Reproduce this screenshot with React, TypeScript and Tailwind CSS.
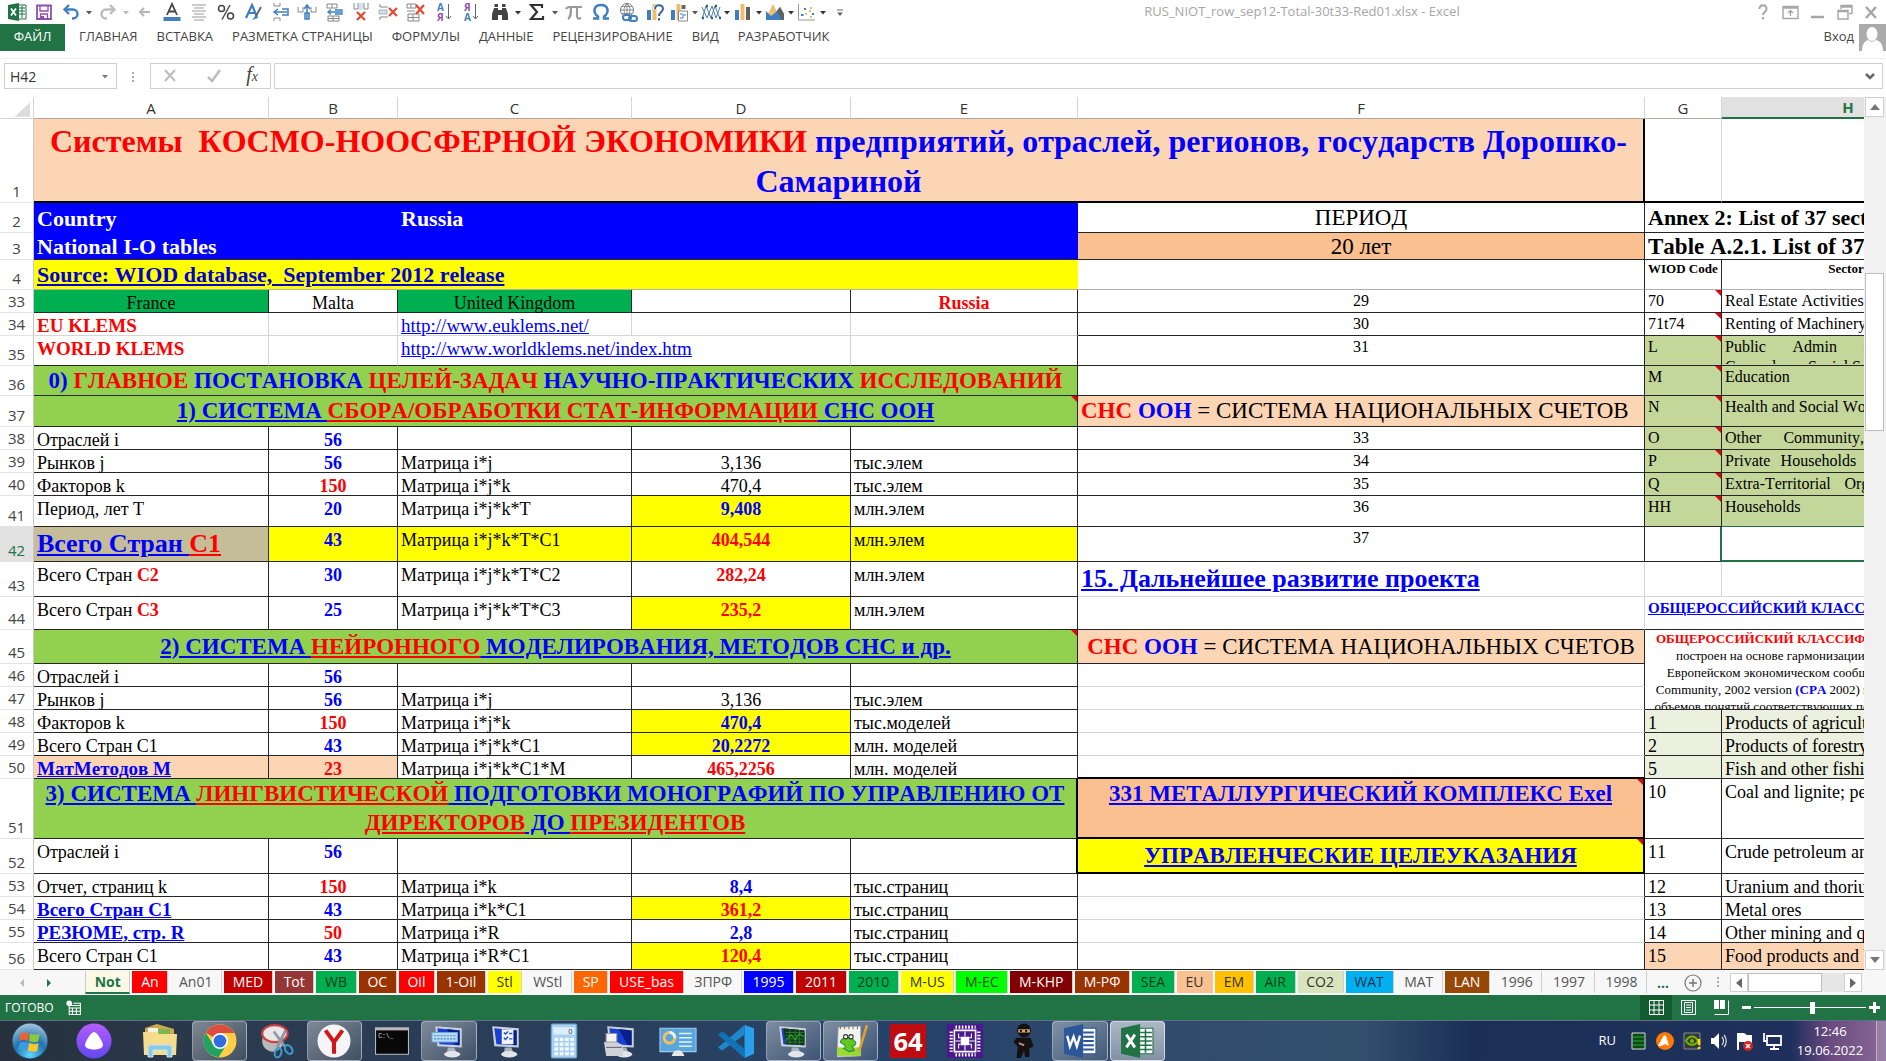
import React, { ReactNode } from "react";

interface CellProps {
  children?: ReactNode;
  className?: string;
  b?: string;
  span?: number;
  rows?: number;
  note?: boolean;
}

const BLACK = 'border-r border-b border-neutral-800';
const GRID = 'border-r border-b border-[#d6d6d6]';

const C = ({ children, className = '', b = BLACK, span, rows, note }: CellProps) => (
  <td colSpan={span} rowSpan={rows} className={`relative p-0 px-[3px] whitespace-nowrap ${b} ${className}`}>
    {children}
    {note && <span className="absolute top-0 right-0 border-t-[6px] border-l-[6px] border-t-red-600 border-l-transparent" />}
  </td>
)

const TOP = 'align-top pt-1 text-lg leading-[18px]';
const LINK = 'align-top pt-1 text-[19px] leading-[18px]';
const SMALL = 'align-top pt-px text-base leading-5';
const BIG = 'text-center text-[23px] leading-[28px]';

const Row = ({ n, h, children }: { n: number; h: string; children: ReactNode }) => (
  <tr className={h}>
    <th
      scope="row"
      className={`p-0 pb-px align-bottom text-[15px] leading-5 font-normal border-r border-b border-r-[#c8c8c8] border-b-[#e4e4e4] font-['Open_Sans',sans-serif] ${n === 42 ? 'bg-[#e1e1e1] text-[#217346]' : 'text-[#444]'}`}
    >
      {n}
    </th>
    {children}
  </tr>
)

const Blue = ({ children }: { children: ReactNode }) => <span className="text-[#0000ff]">{children}</span>
const Red = ({ children }: { children: ReactNode }) => <span className="text-[#ff0000]">{children}</span>

// A-E of an ordinary data row
interface CalcProps {
  a: ReactNode;
  b: string;
  bRed?: boolean;
  c?: string;
  d?: string;
  dStyle?: string;
  e?: string;
  aStyle?: string;
  bStyle?: string;
  fill?: string;
}

const Calc = ({ a, b, bRed, c, d, dStyle = '', e, aStyle = TOP, bStyle = '', fill = '' }: CalcProps) => (
  <>
    <C className={aStyle}>{a}</C>
    <C className={`${TOP} text-center font-bold ${bRed ? 'text-[#ff0000]' : 'text-[#0000ff]'} ${bStyle} ${fill}`}>{b}</C>
    <C className={`${TOP} ${fill}`}>{c}</C>
    <C className={`${TOP} text-center ${dStyle}`}>{d}</C>
    <C className={`${TOP} ${fill}`}>{e}</C>
  </>
)

const YB = 'bg-[#ffff00] font-bold text-[#0000ff]';
const YR = 'bg-[#ffff00] font-bold text-[#ff0000]';

// G-H with a sector code
const Sector = ({ code, name, fill = '', note = true, hb }: { code: string; name: string; fill?: string; note?: boolean; hb?: string }) => (
  <>
    <C className={`${SMALL} ${fill}`} note={note}>{code}</C>
    <C className={`${SMALL} ${fill}`} b={hb}>
      <div className="max-h-[27px] overflow-hidden whitespace-normal text-justify">{name}</div>
    </C>
  </>
)

const Product = ({ code, name, fill = '' }: { code: string; name: string; fill?: string }) => (
  <>
    <C className={`${TOP} ${fill}`}>{code}</C>
    <C className={`${TOP} ${fill}`}>{name}</C>
  </>
)

const FNum = ({ n }: { n?: string }) => <C className={`${SMALL} text-center`}>{n}</C>

const LIGHT_F = 'border-r border-b border-r-neutral-800 border-b-[#d6d6d6]';
const THICK = 'border-r-2 border-b-2 border-black';
const GREEN = 'bg-[#c4d79b]';
const SECTION = 'bg-[#92d050] font-bold';
const columns = ['A', 'B', 'C', 'D', 'E', 'F', 'G', 'H'];

const Sheet = () => (
  <table className="table-fixed border-separate border-spacing-0 w-[calc(100%+111px)] font-['Liberation_Serif',serif] [font-kerning:none] text-black">
    <colgroup>
      <col className="w-[34px]" />
      <col className="w-[235px]" />
      <col className="w-[129px]" />
      <col className="w-[234px]" />
      <col className="w-[219px]" />
      <col className="w-[227px]" />
      <col />
      <col className="w-[77px]" />
      <col className="w-[253px]" />
    </colgroup>
    <thead>
      <tr className="h-[22px] font-['Open_Sans',sans-serif] text-[15px] leading-5 text-[#333]">
        <th className="p-0 border-r border-b border-[#d6d6d6]">
          <svg viewBox="0 0 34 20" className="w-full h-5"><path d="M15 19H31V4Z" fill="#dcdcdc" /></svg>
        </th>
        {columns.map((c) => (
          <th
            key={c}
            scope="col"
            className={`p-0 border-r ${c === 'H' ? 'bg-[#e1e1e1] border-b-2 border-b-[#217346] text-[#217346] font-bold' : 'border-b border-b-[#b4a89c] border-r-[#d6d6d6] font-normal'}`}
          >
            {c}
          </th>
        ))}
      </tr>
    </thead>
    <tbody>
      <Row n={1} h="h-[84px]">
        <C span={6} b={THICK} className="bg-[#fcd5b4] text-center align-top pt-0.5 text-[32px] leading-10 font-bold">
          <div className="whitespace-pre-wrap">
            <Red>Системы  КОСМО-НООСФЕРНОЙ ЭКОНОМИКИ</Red> <Blue>предприятий, отраслей, регионов, государств Дорошко-Самариной</Blue>
          </div>
        </C>
        <C b="border-r border-b-2 border-r-[#d6d6d6] border-b-black" />
        <C b="border-b-2 border-black" />
      </Row>
      <Row n={2} h="h-[30px]">
        <C span={2} b="" className="bg-[#0000ff] text-white font-bold pt-0.5 text-[22px] leading-[28px]">Country</C>
        <C span={3} b="" className="bg-[#0000ff] text-white font-bold pt-0.5 text-[22px] leading-[28px]">Russia</C>
        <C className={BIG}>ПЕРИОД</C>
        <C span={2} className="font-bold text-[22px] leading-[28px]">Annex 2: List of 37 sectors</C>
      </Row>
      <Row n={3} h="h-[27px]">
        <C span={5} b="border-b border-neutral-800" className="bg-[#0000ff] text-white font-bold pt-0.5 text-[22px] leading-[24px]">National I-O tables</C>
        <C className="bg-[#fac090] text-center pt-0.5 text-[23px] leading-[24px]">20 лет</C>
        <C span={2} className="font-bold pt-0.5 text-[23px] leading-[24px]">Table A.2.1. List of 37 sectors</C>
      </Row>
      <Row n={4} h="h-[30px]">
        <C span={5} b="border-b border-[#b0b0b0]" className="bg-[#ffff00] font-bold text-[22px] leading-[28px]">
          <a href="#wiod" className="underline text-[#0000d0] whitespace-pre">Source: WIOD database,  September 2012 release</a>
        </C>
        <C b="border-r border-b border-r-neutral-800 border-b-[#b0b0b0]" />
        <C b="border-r border-b border-r-neutral-800 border-b-[#b0b0b0]" className="align-top text-[13px] leading-[18px] font-bold">WIOD Code</C>
        <C b="border-b border-[#b0b0b0]" className="align-top text-center text-[13px] leading-[18px] font-bold">Sectors</C>
      </Row>
      <Row n={33} h="h-[23px]">
        <C className={`${TOP} text-center bg-[#00b050]`}>France</C>
        <C className={`${TOP} text-center`}>Malta</C>
        <C className={`${TOP} text-center bg-[#00b050]`}>United Kingdom</C>
        <C />
        <C className={`${TOP} text-center font-bold text-[#ff0000]`}>Russia</C>
        <FNum n="29" />
        <Sector code="70" name="Real Estate Activities" />
      </Row>
      <Row n={34} h="h-[23px]">
        <C b={GRID} className={`${LINK} font-bold text-[#ff0000]`}>EU KLEMS</C>
        <C b={GRID} />
        <C b={GRID} className={LINK}><a href="#euklems" className="underline text-[#0000ff]">http://www.euklems.net/</a></C>
        <C b={GRID} />
        <C b={LIGHT_F} />
        <FNum n="30" />
        <Sector code="71t74" name="Renting of Machinery & Equipment" />
      </Row>
      <Row n={35} h="h-[30px]">
        <C className={`${LINK} font-bold text-[#ff0000]`} b="border-r border-b border-r-[#d6d6d6] border-b-neutral-800">WORLD KLEMS</C>
        <C b="border-r border-b border-r-[#d6d6d6] border-b-neutral-800" />
        <C span={2} b="border-r border-b border-r-[#d6d6d6] border-b-neutral-800" className={LINK}>
          <a href="#worldklems" className="underline text-[#0000ff]">http://www.worldklems.net/index.htm</a>
        </C>
        <C />
        <FNum n="31" />
        <Sector code="L" name="Public Admin and Defence; Compulsory Social Security" fill={GREEN} />
      </Row>
      <Row n={36} h="h-[30px]">
        <C span={5} className={`${BIG} ${SECTION}`}>
          <Blue>0) </Blue><Red>ГЛАВНОЕ </Red><Blue>ПОСТАНОВКА </Blue><Red>ЦЕЛЕЙ-ЗАДАЧ </Red><Blue>НАУЧНО-ПРАКТИЧЕСКИХ </Blue><Red>ИССЛЕДОВАНИЙ</Red>
        </C>
        <FNum />
        <Sector code="M" name="Education" fill={GREEN} />
      </Row>
      <Row n={37} h="h-[31px]">
        <C span={5} className={`${BIG} ${SECTION}`} note>
          <a href="#s1"><u className="text-[#0000ff]">1) СИСТЕМА </u><u className="text-[#ff0000]">СБОРА/ОБРАБОТКИ СТАТ-ИНФОРМАЦИИ</u><u className="text-[#0000ff]"> СНС ООН</u></a>
        </C>
        <C className="bg-[#fcd5b4] text-[23px] leading-[28px]"><b><Red>СНС </Red><Blue>ООН</Blue></b> = СИСТЕМА НАЦИОНАЛЬНЫХ СЧЕТОВ</C>
        <Sector code="N" name="Health and Social Work" fill={GREEN} />
      </Row>
      <Row n={38} h="h-[23px]">
        <Calc a="Отраслей i" b="56" />
        <FNum n="33" />
        <C className={`${SMALL} ${GREEN}`} note>O</C>
        <C className={`${SMALL} ${GREEN}`}><div className="max-h-5 overflow-hidden whitespace-normal text-justify">Other Community, Social and Personal Services</div></C>
      </Row>
      <Row n={39} h="h-[23px]">
        <Calc a="Рынков j" b="56" c="Матрица i*j" d="3,136" e="тыс.элем" />
        <FNum n="34" />
        <C className={`${SMALL} ${GREEN}`} note>P</C>
        <C className={`${SMALL} ${GREEN}`}><div className="max-h-5 overflow-hidden whitespace-normal text-justify">Private Households with Employed Persons</div></C>
      </Row>
      <Row n={40} h="h-[23px]">
        <Calc a="Факторов k" b="150" bRed c="Матрица i*j*k" d="470,4" e="тыс.элем" />
        <FNum n="35" />
        <C className={`${SMALL} ${GREEN}`} note>Q</C>
        <C className={`${SMALL} ${GREEN}`}><div className="max-h-5 overflow-hidden whitespace-normal text-justify">Extra-Territorial Organizations and Bodies</div></C>
      </Row>
      <Row n={41} h="h-[31px]">
        <Calc a="Период, лет T" b="20" c="Матрица i*j*k*T" d="9,408" dStyle={YB} e="млн.элем" />
        <FNum n="36" />
        <Sector code="HH" name="Households" fill={GREEN} hb="border-b border-[#217346]" />
      </Row>
      <Row n={42} h="h-[35px]">
        <Calc
          a={<a href="#c1" className="font-bold"><u className="text-[#0000ff]">Всего Стран </u><u className="text-[#ff0000]">С1</u></a>}
          aStyle="bg-[#c4bd97] text-[26px] leading-[32px]"
          b="43"
          c="Матрица i*j*k*T*C1"
          d="404,544"
          dStyle={YR}
          e="млн.элем"
          fill="bg-[#ffff00]"
        />
        <FNum n="37" />
        <C b="border-r-2 border-b border-r-[#217346] border-b-neutral-800" />
        <C b="border-b-2 border-[#217346]" />
      </Row>
      <Row n={43} h="h-[35px]">
        <Calc a={<>Всего Стран <b><Red>C2</Red></b></>} b="30" c="Матрица i*j*k*T*C2" d="282,24" dStyle="font-bold text-[#ff0000]" e="млн.элем" />
        <C b={GRID} className="text-[26px] leading-[32px] font-bold"><a href="#s15" className="underline text-[#0000ff]">15. Дальнейшее развитие проекта</a></C>
        <C b={GRID} />
        <C b={GRID} />
      </Row>
      <Row n={44} h="h-[33px]">
        <Calc a={<>Всего Стран <b><Red>C3</Red></b></>} b="25" c="Матрица i*j*k*T*C3" d="235,2" dStyle={YR} e="млн.элем" />
        <C b="border-r border-b border-r-[#d6d6d6] border-b-neutral-800" />
        <C span={2} className="align-top text-[15px] leading-[22px] font-bold"><a href="#okpd" className="underline text-[#0000ff]">ОБЩЕРОССИЙСКИЙ КЛАССИФИКАТОР</a></C>
      </Row>
      <Row n={45} h="h-[34px]">
        <C span={5} className={`${BIG} ${SECTION}`} note>
          <a href="#s2"><u className="text-[#0000ff]">2) СИСТЕМА </u><u className="text-[#ff0000]">НЕЙРОННОГО</u><u className="text-[#0000ff]"> МОДЕЛИРОВАНИЯ, МЕТОДОВ СНС и др.</u></a>
        </C>
        <C className={`${BIG} bg-[#fcd5b4]`}><b><Red>СНС </Red><Blue>ООН</Blue></b> = СИСТЕМА НАЦИОНАЛЬНЫХ СЧЕТОВ</C>
        <C span={2} rows={3} className="align-top text-center text-[13px] leading-[17px]">
          <div className="h-[79px] overflow-hidden">
            <b><Red>ОБЩЕРОССИЙСКИЙ КЛАССИФИКАТОР ОКПД</Red></b><br />
            построен на основе гармонизации с продукцией<br />
            Европейском экономическом сообществе Statistical<br />
            Community, 2002 version <b><Blue>(CPA</Blue></b> 2002) путем сохранения<br />
            объемов понятий соответствующих позиций и их кодов
          </div>
        </C>
      </Row>
      <Row n={46} h="h-[23px]">
        <Calc a="Отраслей i" b="56" />
        <C b={LIGHT_F} />
      </Row>
      <Row n={47} h="h-[23px]">
        <Calc a="Рынков j" b="56" c="Матрица i*j" d="3,136" e="тыс.элем" />
        <C b={LIGHT_F} />
      </Row>
      <Row n={48} h="h-[23px]">
        <Calc a="Факторов k" b="150" bRed c="Матрица i*j*k" d="470,4" dStyle={YB} e="тыс.моделей" />
        <C b={LIGHT_F} />
        <Product code="1" name="Products of agriculture" fill="bg-[#ebf1de]" />
      </Row>
      <Row n={49} h="h-[23px]">
        <Calc a="Всего Стран С1" b="43" c="Матрица i*j*k*C1" d="20,2272" dStyle={YB} e="млн. моделей" />
        <C b={LIGHT_F} />
        <Product code="2" name="Products of forestry" fill="bg-[#ebf1de]" />
      </Row>
      <Row n={50} h="h-[23px]">
        <Calc
          a={<a href="#m" className="underline font-bold text-[#0000ff]">МатМетодов M</a>}
          aStyle={`${LINK} bg-[#fcd5b4]`}
          b="23"
          bRed
          bStyle="bg-[#fcd5b4]"
          c="Матрица i*j*k*C1*M"
          d="465,2256"
          dStyle="font-bold text-[#ff0000]"
          e="млн. моделей"
        />
        <C b="border-r border-b-2 border-r-neutral-800 border-b-black" />
        <Product code="5" name="Fish and other fishing" fill="bg-[#ebf1de]" />
      </Row>
      <Row n={51} h="h-[60px]">
        <C span={5} b="border-r-2 border-b border-r-black border-b-neutral-800" className={`${SECTION} align-top text-center text-[23px] leading-[29px]`}>
          <a href="#s3">
            <u className="text-[#0000ff]">3) СИСТЕМА </u><u className="text-[#ff0000]">ЛИНГВИСТИЧЕСКОЙ</u><u className="text-[#0000ff]"> ПОДГОТОВКИ МОНОГРАФИЙ ПО УПРАВЛЕНИЮ ОТ </u><br />
            <u className="text-[#ff0000]">ДИРЕКТОРОВ</u><u className="text-[#0000ff]"> ДО </u><u className="text-[#ff0000]">ПРЕЗИДЕНТОВ</u>
          </a>
        </C>
        <C b={THICK} className="bg-[#fac090] align-top text-center text-[23px] leading-[29px] font-bold" note>
          <a href="#met" className="underline text-[#0000ff]">331 МЕТАЛЛУРГИЧЕСКИЙ КОМПЛЕКС Exel</a>
        </C>
        <Product code="10" name="Coal and lignite; peat" />
      </Row>
      <Row n={52} h="h-[35px]">
        <C className={TOP}>Отраслей i</C>
        <C className={`${TOP} text-center font-bold text-[#0000ff]`}>56</C>
        <C />
        <C />
        <C b="border-r-2 border-b border-r-black border-b-neutral-800" />
        <C b={THICK} className={`${BIG} bg-[#ffff00] font-bold`} note>
          <a href="#goals" className="underline text-[#0000ff]">УПРАВЛЕНЧЕСКИЕ ЦЕЛЕУКАЗАНИЯ</a>
        </C>
        <Product code="11" name="Crude petroleum and" />
      </Row>
      <Row n={53} h="h-[23px]">
        <Calc a="Отчет, страниц k" b="150" bRed c="Матрица i*k" d="8,4" dStyle="font-bold text-[#0000ff]" e="тыс.страниц" />
        <C b={LIGHT_F} />
        <Product code="12" name="Uranium and thorium" />
      </Row>
      <Row n={54} h="h-[23px]">
        <Calc a={<a href="#c1" className="underline font-bold text-[#0000ff]">Всего Стран С1</a>} aStyle={LINK} b="43" c="Матрица i*k*C1" d="361,2" dStyle={YR} e="тыс.страниц" />
        <C b={LIGHT_F} />
        <Product code="13" name="Metal ores" />
      </Row>
      <Row n={55} h="h-[23px]">
        <Calc a={<a href="#r" className="underline font-bold text-[#0000ff]">РЕЗЮМЕ, стр. R</a>} aStyle={LINK} b="50" bRed c="Матрица i*R" d="2,8" dStyle="font-bold text-[#0000ff]" e="тыс.страниц" />
        <C b={LIGHT_F} />
        <Product code="14" name="Other mining and quarrying" />
      </Row>
      <Row n={56} h="h-[27px]">
        <Calc a="Всего Стран С1" b="43" c="Матрица i*R*C1" d="120,4" dStyle={YR} e="тыс.страниц" />
        <C />
        <Product code="15" name="Food products and beverages" fill="bg-[#fcd5b4]" />
      </Row>
    </tbody>
  </table>
)

const Caret = ({ color = '#555' }: { color?: string }) => (
  <svg viewBox="0 0 10 22" className="w-[10px] h-[22px] shrink-0"><path d="M2 10h6l-3 3.5Z" fill={color} /></svg>
)

const Ico = ({ children, label, narrow }: { children: ReactNode; label: string; narrow?: boolean }) => (
  <button aria-label={label} className={`${narrow ? 'w-[22px]' : 'w-[27px]'} h-[22px] shrink-0 flex items-center justify-center`}>
    <svg viewBox="0 0 20 20" className="w-5 h-5 overflow-visible" fill="none">{children}</svg>
  </button>
)

const bars = (
  <>
    <path d="M2 8h4v10H2Z" fill="#3f7fbf" />
    <path d="M7.500 2h4v16h-4Z" fill="#f0bd6c" />
  </>
)

const QuickAccess = () => (
  <div className="flex items-center pl-[3px]">
    <Ico label="Excel">
      <path d="M11 3h8v14h-8Z" fill="#fff" stroke="#217346" />
      <path d="M12 6h6M12 9h6M12 12h6M15 4v12" stroke="#217346" />
      <path d="M1 3 12 1v18L1 17Z" fill="#217346" />
      <path d="m4 6.500 5 7M9 6.500l-5 7" stroke="#fff" strokeWidth="1.800" />
    </Ico>
    <Ico label="Сохранить">
      <path d="M3 3.500h14v13.500H3Z" stroke="#8e4fb0" strokeWidth="1.800" />
      <path d="M6 4v5h8V4M6.500 17v-5h7v5" stroke="#8e4fb0" strokeWidth="1.300" />
      <path d="M7 14h3v3H7Z" fill="#8e4fb0" />
    </Ico>
    <Ico label="Отменить">
      <path d="M4 7.500h8a4.500 4.500 0 0 1 0 9H11" stroke="#3f7fbf" strokeWidth="2.400" />
      <path d="M8 3 3.500 7.500 8 12" stroke="#3f7fbf" strokeWidth="2.400" />
    </Ico>
    <Caret />
    <Ico label="Вернуть">
      <path d="M16 7.500H8a4.500 4.500 0 0 0 0 9h1" stroke="#bdbdbd" strokeWidth="2.400" />
      <path d="m12 3 4.500 4.500L12 12" stroke="#bdbdbd" strokeWidth="2.400" />
    </Ico>
    <Caret color="#bbb" />
    <Ico label="Назад"><path d="M15 10H5M9 6l-4 4 4 4" stroke="#b5b5b5" strokeWidth="2" /></Ico>
    <Ico label="Цвет текста">
      <path d="M5 13 10 2l5 11M7 9.500h6" stroke="#444" strokeWidth="1.800" />
      <path d="M1.500 15h17v4h-17Z" fill="#3f7fbf" />
    </Ico>
    <Ico label="По центру"><path d="M3 3h14M5 6h10M3 9h14M5 12h10M3 15h14M5 18h10" stroke="#9a9a9a" strokeWidth="1.200" /></Ico>
    <Ico label="Процент">
      <circle cx="5.500" cy="6.500" r="3" stroke="#444" strokeWidth="1.500" />
      <circle cx="14.500" cy="14" r="3" stroke="#444" strokeWidth="1.500" />
      <path d="M14 3 6 17.500" stroke="#444" strokeWidth="1.400" />
    </Ico>
    <Ico label="Стиль">
      <path d="M3 16 9 3l5 12M5 11h7" stroke="#3f7fbf" strokeWidth="2.200" />
      <path d="m18 5-5 9" stroke="#666" strokeWidth="2" />
      <path d="m13 13-4 5 6-2Z" fill="#3f7fbf" />
    </Ico>
    <Ico label="Вставить ячейки влево">
      <path d="M4 1v3h6V1M4 19v-3h6v3" stroke="#888" />
      <path d="M17 10H4M8 7l-4 3 4 3M12 7h6v6h-6" stroke="#3f7fbf" strokeWidth="1.500" />
    </Ico>
    <Ico label="Вставить столбец">
      <path d="M1 5v5h5V5M19 5v5h-5V5" stroke="#888" />
      <path d="M10 17V4M7 7l3-4 3 4M8 11h4v6H8Z" stroke="#3f7fbf" strokeWidth="1.500" />
    </Ico>
    <Ico label="Вставить ячейки">
      <path d="M3 2h10v4H3ZM8 2v4M4 14h11v5H4ZM9 14v5M4 16.500h11" stroke="#888" />
      <path d="M17 10H4M7 7.500 4 10l3 2.500M11 8h7v4h-7" stroke="#3f7fbf" strokeWidth="1.400" />
    </Ico>
    <Ico label="Удалить столбец">
      <path d="M3 1v6h4V1M17 1v6h-4V1" stroke="#888" />
      <path d="M8 1h4v7H8Z" fill="#cfe4f0" />
      <path d="m6 10 8 8M14 10l-8 8" stroke="#e2492f" strokeWidth="2.200" />
    </Ico>
    <Ico label="Удалить строку">
      <path d="M2 2v3h8M2 18v-3h8" stroke="#888" />
      <path d="M1 8h8v4H1Z" fill="#cfe4f0" stroke="#888" strokeWidth=".6" />
      <path d="m11 6 8 8M19 6l-8 8" stroke="#e2492f" strokeWidth="2.200" />
    </Ico>
    <Ico label="Удалить ячейки">
      <path d="M2 2h9v4H2ZM6 2v4M2 9h8M3 12h11v7H3ZM8 12v7M3 15.500h11" stroke="#888" />
      <path d="m11 3 8 9M19 3l-8 9" stroke="#e2492f" strokeWidth="2.200" />
    </Ico>
    <div className="flex px-0.5">
      <Ico label="Сортировка по возрастанию">
        <text x="3" y="9" fontSize="10" fontWeight="700" fill="#3f7fbf" fontFamily="Open Sans">А</text>
        <text x="3" y="19" fontSize="10" fontWeight="700" fill="#8e4fb0" fontFamily="Open Sans">Я</text>
        <path d="M14.500 2v15M12 14l2.500 3 2.500-3" stroke="#666" />
      </Ico>
      <Ico label="Сортировка по убыванию">
        <text x="3" y="9" fontSize="10" fontWeight="700" fill="#8e4fb0" fontFamily="Open Sans">Я</text>
        <text x="3" y="19" fontSize="10" fontWeight="700" fill="#3f7fbf" fontFamily="Open Sans">А</text>
        <path d="M14.500 2v15M12 14l2.500 3 2.500-3" stroke="#666" />
      </Ico>
    </div>
    <Ico label="Найти">
      <path d="M4.500 2h3.500v3H4.500ZM12 2h3.500v3H12ZM4 6h4v2h4V6h4l2 6v6h-6v-5H8v5H2v-6Z" fill="#444" />
    </Ico>
    <Caret color="#333" />
    <Ico label="Сумма"><path d="M15 6V3H4l6 7-6 7h12v-3" stroke="#333" strokeWidth="2.200" /></Ico>
    <Caret />
    <Ico label="Формула"><path d="M2 7c1-2 2-2 4-2h12M7 5c0 6 0 10-3 12M13 5v9c0 3 2 3 4 2" stroke="#9a9a9a" strokeWidth="2.200" /></Ico>
    <Ico label="Символ"><path d="M2 16.500h5v-2C1 10 3 3 10 3s9 7 3 11.500v2h5" stroke="#3f7fbf" strokeWidth="2.500" /></Ico>
    <Ico label="Гиперссылка">
      <circle cx="9" cy="8" r="6.500" stroke="#777" />
      <path d="M9 1.500v13M2.500 8h13M4 4.500h10M4 11.500h10M9 1.500c-4 4-4 9 0 13M9 1.500c4 4 4 9 0 13" stroke="#777" strokeWidth=".8" />
      <rect x="5" y="13" width="8" height="5" rx="2.500" stroke="#3f7fbf" strokeWidth="2" fill="#fff" />
      <rect x="11" y="14" width="8" height="5" rx="2.500" stroke="#3f7fbf" strokeWidth="2" />
    </Ico>
    <Ico label="Рекомендуемые диаграммы">
      {bars}
      <path d="M10 7c0-5 8-5 8 0 0 3-4 3-4 7M14 16v2.500" stroke="#fff" strokeWidth="4" />
      <path d="M10 7c0-5 8-5 8 0 0 3-4 3-4 7M14 16v2.500" stroke="#3567a0" strokeWidth="2" />
    </Ico>
    <Ico label="Сводная диаграмма" narrow>
      {bars}
      <path d="M12.500 3h4v4h-4Z" fill="#666" />
      <path d="M9.500 9h9v10h-9Z" fill="#fff" stroke="#888" />
      <path d="M11 12h3M11 16h3v-3h3" stroke="#3f7fbf" />
    </Ico>
    <Caret />
    <Ico label="График" narrow>
      <path d="m1 17 4-13 5 12 4-12 5 13M1 5l5 11 5-12 4 12 4-11" stroke="#4c7ea8" />
      <path d="M1 16h2M5 4h2M10 16h2M14 4h2M18 16h2" stroke="#2e5f8a" strokeWidth="2.500" />
    </Ico>
    <Caret color="#333" />
    <Ico label="Гистограмма" narrow>
      {bars}
      <path d="M13 5h4v13h-4Z" fill="#606060" />
    </Ico>
    <Caret color="#333" />
    <Ico label="С областями" narrow>
      <path d="M2 14 8 2l4 8-5 8Z" fill="#f0bd6c" />
      <path d="M1 18V9l5 5 4-3 5-6 4 7v6Z" fill="#3f7fbf" />
      <path d="m12 9 3-4 4 7v6h-2Z" fill="#606060" />
    </Ico>
    <Caret color="#333" />
    <Ico label="Точечная" narrow>
      <path d="M1.500 2v16H18" stroke="#999" />
      <path d="M4 13h2.500M7 7h2M15 12h2" stroke="#3f7fbf" strokeWidth="2.200" />
      <path d="M8 12h2M13 6h2M12 9h2M13 15h2" stroke="#f0bd6c" strokeWidth="2.200" />
    </Ico>
    <Caret color="#333" />
    <Ico label="Настройка панели"><path d="M5 8h6" stroke="#666" /><path d="M5 10.500h6L8 14Z" fill="#666" /></Ico>
  </div>
)

const TitleBar = () => (
  <header className="flex items-center h-6">
    <QuickAccess />
    <h1 className="flex-1 text-center text-[13px] text-[#a6a6a6] whitespace-nowrap">RUS_NIOT_row_sep12-Total-30t33-Red01.xlsx - Excel</h1>
    <div className="flex pr-0.5">
      <Ico label="Справка"><path d="M6.500 7c0-5 7-5 7 0 0 3-3.500 3-3.500 6M10 15v2.500" stroke="#a6a6a6" strokeWidth="2" /></Ico>
      <Ico label="Параметры ленты"><path d="M3 4.500h15v12H3ZM3 6h15M10.500 14V8.500M8 11l2.500-2.500L13 11" stroke="#a6a6a6" strokeWidth="1.400" /></Ico>
      <Ico label="Свернуть"><path d="M4 15h13" stroke="#a6a6a6" strokeWidth="2.500" /></Ico>
      <Ico label="Восстановить"><path d="M7 7V3.500h11v8h-3M7 5h11M4 8.500h10V17H4ZM4 9.500h10" stroke="#a6a6a6" strokeWidth="1.400" /></Ico>
      <Ico label="Закрыть"><path d="m5 5 10 11M15 5 5 16" stroke="#a6a6a6" strokeWidth="2.500" /></Ico>
    </div>
  </header>
)

const ribbonTabs = ['ГЛАВНАЯ', 'ВСТАВКА', 'РАЗМЕТКА СТРАНИЦЫ', 'ФОРМУЛЫ', 'ДАННЫЕ', 'РЕЦЕНЗИРОВАНИЕ', 'ВИД', 'РАЗРАБОТЧИК'];

const Ribbon = () => (
  <nav className="flex items-center h-[35px] pb-2 text-[13px] text-[#444] border-b border-[#efefef]">
    <button className="h-[27px] w-[65px] bg-[#217346] text-white">ФАЙЛ</button>
    <div className="flex flex-1 gap-[19px] pl-[14px]">
      {ribbonTabs.map((t) => <button key={t}>{t}</button>)}
    </div>
    <span className="pr-[5px]">Вход</span>
    <svg viewBox="0 0 27 27" className="w-[27px] h-[27px]">
      <path d="M0 0h27v27H0Z" fill="#ababab" />
      <ellipse cx="13" cy="10" rx="5.500" ry="7" fill="#fff" />
      <path d="M3 27c0-7 3-10 6-11l4 2 4-2c4 1 7 4 7 11Z" fill="#fff" />
    </svg>
  </nav>
)

const FormulaBar = () => (
  <div className="flex items-center h-[38px] pl-1 pr-[3px] pb-2 pt-1">
    <div className="flex items-center w-[113px] h-[26px] border border-[#d0d0d0]">
      <input aria-label="Имя" defaultValue="H42" className="w-[95px] pl-[5px] text-[14px] text-[#333] outline-none" />
      <Caret color="#777" />
    </div>
    <svg viewBox="0 0 33 26" className="w-[33px] h-[26px]"><path d="M16 9v10" stroke="#aaa" strokeDasharray="2 2" strokeWidth="2" /></svg>
    <div className="flex items-center justify-between w-[121px] h-[26px] px-2 border border-[#d0d0d0]">
      <Ico label="Отмена" narrow><path d="m5 4 10 11M15 4 5 15" stroke="#bdbdbd" strokeWidth="2" /></Ico>
      <Ico label="Ввод" narrow><path d="m4 11 4 4 8-11" stroke="#bdbdbd" strokeWidth="2.500" /></Ico>
      <button aria-label="Вставить функцию" className="font-['Liberation_Serif',serif] italic text-xl leading-5 text-[#444] pr-1 pb-0.5">f<span className="text-sm">x</span></button>
    </div>
    <div className="flex items-center flex-1 h-[26px] ml-[3px] border border-[#d0d0d0]">
      <input aria-label="Строка формул" className="flex-1 outline-none" />
      <Ico label="Развернуть строку формул"><path d="m7 8 4 4 4-4" stroke="#666" strokeWidth="2.500" /></Ico>
    </div>
  </div>
)

const VScroll = () => (
  <div className="flex flex-col w-[22px] pl-px pr-0.5 bg-[#f1f1f1] shrink-0">
    <button aria-label="Вверх" className="h-5 bg-white border border-[#cfcfcf] flex justify-center items-center"><svg viewBox="0 0 10 6" className="w-2.5 h-1.5"><path d="M0 6h10L5 0Z" fill="#777" /></svg></button>
    <div className="flex-1 pt-[156px]">
      <div className="h-[158px] bg-white border border-[#bdbdbd]" />
    </div>
    <button aria-label="Вниз" className="h-5 bg-white border border-[#cfcfcf] flex justify-center items-center"><svg viewBox="0 0 10 6" className="w-2.5 h-1.5"><path d="M0 0h10L5 6Z" fill="#777" /></svg></button>
  </div>
)

const sheets = [
  ['An', 'bg-[#ff0000] text-white'],
  ['An01', 'text-[#555]'],
  ['MED', 'bg-[#c00000] text-white'],
  ['Tot', 'bg-[#963634] text-white'],
  ['WB', 'bg-[#00b050] text-[#103a1c]'],
  ['OC', 'bg-[#993300] text-white'],
  ['Oil', 'bg-[#ff0000] text-white'],
  ['1-Oil', 'bg-[#993300] text-white'],
  ['Stl', 'bg-[#ffff00] text-[#333]'],
  ['WStl', 'text-[#555]'],
  ['SP', 'bg-[#ff6600] text-white'],
  ['USE_bas', 'bg-[#ff0000] text-white'],
  ['ЗПРФ', 'text-[#555]'],
  ['1995', 'bg-[#0000ff] text-white'],
  ['2011', 'bg-[#c00000] text-white'],
  ['2010', 'bg-[#00b050] text-[#103a1c]'],
  ['M-US', 'bg-[#ffff00] text-[#333]'],
  ['M-EC', 'bg-[#00ff00] text-[#1c4a1c]'],
  ['M-КНР', 'bg-[#800000] text-white'],
  ['М-РФ', 'bg-[#993300] text-white'],
  ['SEA', 'bg-[#00b050] text-[#103a1c]'],
  ['EU', 'bg-[#fac090] text-[#333]'],
  ['EM', 'bg-[#ffc000] text-[#333]'],
  ['AIR', 'bg-[#00b050] text-[#103a1c]'],
  ['CO2', 'bg-[#d8e4bc] text-[#333]'],
  ['WAT', 'bg-[#00b0f0] text-[#103050]'],
  ['MAT', 'text-[#555]'],
  ['LAN', 'bg-[#974706] text-white'],
  ['1996', 'text-[#555]'],
  ['1997', 'text-[#555]'],
  ['1998', 'text-[#555]'],
];

const SheetTabs = () => (
  <div className="flex items-center h-[25px] bg-[#f7f7f7] text-sm leading-5">
    <div className="flex w-[85px] pl-3 gap-1">
      <Ico label="Предыдущий лист" narrow><path d="M11 6v8l-4-4Z" fill="#bbb" /></Ico>
      <Ico label="Следующий лист" narrow><path d="M8 6v8l4-4Z" fill="#217346" /></Ico>
    </div>
    <div className="flex flex-1 gap-0.5">
      <button className="flex-auto h-[23px] px-1 bg-[#fbf9e6] border-x border-b-2 border-x-[#ccc] border-b-[#217346] text-[#217346] font-bold">Not</button>
      {sheets.map(([name, color]) => (
        <button key={name} className={`flex-auto h-[22px] px-1 border-r border-[#cfcfcf] ${color}`}>{name}</button>
      ))}
    </div>
    <span className="w-8 text-center font-bold text-[#217346]">...</span>
    <Ico label="Новый лист"><circle cx="10" cy="10" r="8" stroke="#777" strokeWidth="1.200" /><path d="M10 6v8M6 10h8" stroke="#777" strokeWidth="1.500" /></Ico>
    <svg viewBox="0 0 24 22" className="w-6 h-[22px]"><path d="M12 5v12" stroke="#aaa" strokeDasharray="2 2" strokeWidth="2" /></svg>
    <div className="flex h-[19px] w-[132px] mr-6 bg-[#e6e6e6]">
      <button aria-label="Влево" className="w-[18px] bg-white border border-[#cfcfcf] flex justify-center items-center"><svg viewBox="0 0 6 10" className="w-1.5 h-2.5"><path d="M6 0v10L0 5Z" fill="#666" /></svg></button>
      <div className="w-[74px] bg-white border border-[#bdbdbd]" />
      <button aria-label="Вправо" className="w-[18px] ml-auto bg-white border border-[#cfcfcf] flex justify-center items-center"><svg viewBox="0 0 6 10" className="w-1.5 h-2.5"><path d="M0 0v10l6-5Z" fill="#666" /></svg></button>
    </div>
  </div>
)

const StatusBar = () => (
  <div className="flex items-center h-[25px] bg-[#217346] text-white text-xs pl-[5px] pr-1.5">
    <span>ГОТОВО</span>
    <svg viewBox="0 0 20 20" className="w-4 h-4 ml-3" fill="none">
      <path d="M4 7h14v11H4ZM4 10h14M4 14h14M8 10v8M13 10v8M9 4h9v3" stroke="#fff" strokeWidth="1.300" />
      <circle cx="4" cy="4" r="3.500" fill="#fff" />
    </svg>
    <div className="flex flex-1 justify-end h-full">
      <button aria-label="Обычный" className="w-8 h-full bg-[#125c30] flex items-center justify-center"><svg viewBox="0 0 15 15" className="w-[15px] h-[15px]" fill="none"><path d="M.5.5h14v14H.5ZM5 0v15M10 0v15M0 5h15M0 10h15" stroke="#fff" /></svg></button>
      <button aria-label="Разметка страницы" className="w-[33px] h-full flex items-center justify-center"><svg viewBox="0 0 15 15" className="w-[15px] h-[15px]" fill="none"><path d="M.5.500h14v14H.5ZM3.500 2.500h8v10h-8ZM5 5h5M5 7.500h5M5 10h5" stroke="#fff" /></svg></button>
      <button aria-label="Страничный" className="w-[33px] h-full flex items-center justify-center"><svg viewBox="0 0 15 15" className="w-[15px] h-[15px]" fill="none"><path d="M.5 14.500h14V.500" stroke="#fff" /><path d="M0 0h5v9H0ZM6 0h5v9H6Z" fill="#fff" /></svg></button>
    </div>
    <div className="flex items-center pl-1">
      <button aria-label="Уменьшить" className="w-[9px] h-[3px] bg-white" />
      <label className="relative mx-[3px] w-[112px] h-4 flex items-center">
        <input type="range" aria-label="Масштаб" defaultValue={52} className="w-full h-4 appearance-none bg-transparent bg-[linear-gradient(#fff,#fff)] bg-[length:100%_1px] bg-center bg-no-repeat [&::-webkit-slider-thumb]:appearance-none [&::-webkit-slider-thumb]:w-[5px] [&::-webkit-slider-thumb]:h-3 [&::-webkit-slider-thumb]:bg-white" />
      </label>
      <button aria-label="Увеличить"><svg viewBox="0 0 11 11" className="w-[11px] h-[11px]"><path d="M5.500 0v11M0 5.500h11" stroke="#fff" strokeWidth="3" /></svg></button>
    </div>
  </div>
)

const Monitor = ({ screen }: { screen: ReactNode }) => (
  <>
    <path d="M15 22h6l2 5h-9Z" fill="#aab4c0" />
    <ellipse cx="19" cy="28.500" rx="7.500" ry="3" fill="#e2e6ea" />
    <path d="M3 2 28 4v18L5 21Z" fill="#c9d2da" />
    <path d="M5 4 26 6v14L7 19Z" fill="#1a3fd0" />
    <path d="M14 4.800 26 6v14l-4-.2Z" fill="#0b1f8a" />
    {screen}
  </>
)

const calcKeys = [0, 1, 2, 3].flatMap((r) => [0, 1, 2, 3].map((c) => [7 + c * 5, 13 + r * 4.5]));

const tasks: { label: string; open?: boolean; active?: boolean; icon: ReactNode }[] = [
  {
    label: 'Chrome', open: true, icon: (
      <>
        <circle cx="16" cy="16" r="15.500" fill="#ffce44" />
        <path d="M16 16 2.600 8.200A15.500 15.500 0 0 1 29.400 8.500H16Z" fill="#dd4b3e" />
        <path d="M2.600 8.200A15.500 15.500 0 0 0 14.500 31.400L22 20 16 16 9.500 19Z" fill="#1da462" />
        <circle cx="16" cy="16" r="7.500" fill="#fff" />
        <circle cx="16" cy="16" r="6" fill="#2f6fe0" />
      </>
    )
  },
  {
    label: 'Ножницы', icon: (
      <>
        <circle cx="12" cy="16" r="10" fill="#b8b8b8" />
        <ellipse cx="14" cy="9" rx="12" ry="8" fill="#e8e8e8" stroke="#d04040" strokeWidth="2" />
        <path d="m13 7 11 15M24 6l-8 16" stroke="#8c97a3" strokeWidth="2.500" />
        <ellipse cx="17" cy="27" rx="3" ry="4.500" fill="none" stroke="#3a9ad0" strokeWidth="2" transform="rotate(15 17 27)" />
        <ellipse cx="27" cy="24" rx="3" ry="4.500" fill="none" stroke="#3a9ad0" strokeWidth="2" transform="rotate(-35 27 24)" />
      </>
    )
  },
  {
    label: 'Яндекс Браузер', open: true, icon: (
      <>
        <circle cx="16" cy="16" r="15.500" fill="#f5f5f5" />
        <path d="m8 6 8 11 8-11M16 16v12" fill="none" stroke="#d01818" strokeWidth="3.800" />
      </>
    )
  },
  {
    label: 'Командная строка', icon: (
      <>
        <path d="M0 3h32v26H0Z" fill="#b8b8b8" />
        <path d="M1 6h30v22H1Z" fill="#080808" />
        <text x="3" y="13" fontSize="6" fill="#ddd" fontFamily="Liberation Mono">C:\_</text>
      </>
    )
  },
  { label: 'Экранная клавиатура', open: true, icon: <Monitor screen={<><path d="M0 8h24v9H0Z" fill="#b8dcf4" stroke="#6aa5d5" /><path d="M2 11h20M2 14h20" stroke="#4a85c0" strokeDasharray="2 1" /></>} /> },
  { label: 'Задачи', icon: <Monitor screen={<><path d="M12 5h11v14H12Z" fill="#f0f4fa" /><path d="m14 8 1.500 1.500L18 7M14 13l1.500 1.500L18 12M19 9h3M19 14h3" fill="none" stroke="#2050c0" strokeWidth="1.300" /></>} /> },
  {
    label: 'Калькулятор', icon: (
      <>
        <rect x="4" y="0" width="24" height="32" rx="1.500" fill="#a8d0f0" stroke="#6aa0cc" />
        <path d="M6 3h20v7H6Z" fill="#dceefa" />
        <text x="20" y="9.500" fontSize="7" fill="#345" fontFamily="Liberation Sans">0</text>
        {calcKeys.map(([x, y]) => <rect key={`${x}-${y}`} x={x} y={y} width="3.500" height="3" fill="#f4faff" />)}
      </>
    )
  },
  { label: 'Устройства', icon: <><Monitor screen={null} /><path d="M0 17h12l6 3v10H2Z" fill="#d0d4d8" /><path d="M2 9h10v8H2Z" fill="#f4f4f4" stroke="#999" /><path d="M2 22h15" stroke="#667" /></> },
  {
    label: 'Панель управления', icon: (
      <>
        <path d="M-1 4h34v22H-1Z" fill="#58a6dc" stroke="#9ccdf0" />
        <circle cx="8" cy="13" r="5" fill="none" stroke="#f0c060" strokeWidth="3" />
        <path d="M8 8a5 5 0 0 1 5 5" fill="none" stroke="#e8f4ff" strokeWidth="3" />
        <path d="M17 9h12M17 13h12M17 17h12M17 21h12" stroke="#e0f2ff" strokeWidth="1.500" />
        <path d="M10 30c2-7 10-7 12 0Z" fill="#e8e8e8" />
      </>
    )
  },
  {
    label: 'VS Code', icon: (
      <>
        <path d="M24 1 33 4v24l-9 4Z" fill="#2aa0ea" />
        <path d="M24 1v9L3 25l-4-3Z" fill="#1f88cc" />
        <path d="M24 32v-9L3 7l-4 3Z" fill="#1073b8" />
      </>
    )
  },
  { label: 'Монитор ресурсов', open: true, icon: <Monitor screen={<><path d="M7 4 27 6v14L9 19Z" fill="#123a18" /><path d="M9 8h17M9 11h17M9 14h17M9 17h17M13 5v14M18 5v14M22 6v14" stroke="#2c8a38" strokeWidth=".7" /><path d="m9 16 5-6 4 5 4-6 4 3" fill="none" stroke="#3c3" strokeWidth=".8" /></>} /> },
  {
    label: 'Notepad++', open: true, icon: (
      <>
        <path d="m4 3 21-1v28l-22 1Z" fill="#f2f4ee" stroke="#aaa" strokeWidth=".6" />
        <path d="M6 2v3M10 2v3M14 2v3M18 2v3M22 2v3" stroke="#777" />
        <path d="M3 22h22v8H3Z" fill="#9ad830" />
        <path d="M6 17c1-5 10-6 13-1 3 1 1 5-2 5l2 4-5 1-5-3c3-1 2-3-2-5Z" fill="#62c81c" stroke="#285" />
        <circle cx="11" cy="12" r="2" fill="#fff" stroke="#333" />
        <circle cx="16" cy="12" r="2" fill="#fff" stroke="#333" />
        <path d="m31 1-6 20-2 4" fill="none" stroke="#e0a030" strokeWidth="2.500" />
      </>
    )
  },
  {
    label: 'AIDA64', icon: (
      <>
        <path d="M-1 0h34v32H-1Z" fill="#c00c10" />
        <text x="16" y="25" textAnchor="middle" fontSize="24" fontWeight="700" fill="#fff" fontFamily="Open Sans">64</text>
      </>
    )
  },
  {
    label: 'CPU-Z', icon: (
      <>
        <path d="M-1 0h34v32H-1Z" fill="#4a1a8c" />
        <path d="M6 6h20v20H6Z" fill="none" stroke="#fff" strokeWidth="1.500" />
        <path d="M12 12h8v8h-8Z" fill="#fff" />
        <path d="M7 3h19M7 29h19" stroke="#fff" strokeWidth="3" strokeDasharray="1.500 1.500" />
        <path d="M3 7v19M29 7v19" stroke="#fff" strokeWidth="3" strokeDasharray="1.500 1.500" />
        <path d="M16 7v5M16 20v5M7 16h5M20 16h5M10 9v4h2M22 9v4h-2M10 23v-4h2M22 23v-4h-2" stroke="#fff" fill="none" />
      </>
    )
  },
  {
    label: 'Ninja', icon: (
      <>
        <circle cx="17" cy="6" r="6.500" fill="#14110f" />
        <path d="M11.500 5h11v3h-11Z" fill="#d8a878" />
        <path d="M13 6.500h2M18 6.500h2" stroke="#000" strokeWidth="1.500" />
        <path d="M10 13h13l3 8-4 2v8h-4l-1-6-3 7h-4l1-11-4-4Z" fill="#14110f" />
        <path d="m12 18 5 2" stroke="#b88" strokeWidth="2" />
      </>
    )
  },
  {
    label: 'Word', open: true, icon: (
      <>
        <path d="M17 4h14v24H17Z" fill="#fff" stroke="#2b579a" />
        <path d="M19 8h10M19 12h10M19 16h10M19 20h10M19 24h10" stroke="#2b579a" strokeWidth="1.800" />
        <path d="M1 4 19 0v32L1 28Z" fill="#2b579a" />
        <path d="m4 11 2.500 10L10 12l3 9 3-10" fill="none" stroke="#fff" strokeWidth="2.200" />
      </>
    )
  },
  {
    label: 'Excel', open: true, active: true, icon: (
      <>
        <path d="M17 4h14v24H17Z" fill="#fff" stroke="#217346" />
        <path d="M19 8h11M19 12h11M19 16h11M19 20h11M19 24h11M24 5v22" stroke="#217346" strokeWidth="1.500" />
        <path d="M1 4 19 0v32L1 28Z" fill="#217346" />
        <path d="m6 10 8 12M14 10 6 22" stroke="#fff" strokeWidth="2.600" />
      </>
    )
  },
];

const Tray = () => (
  <div className="flex items-center text-white text-[13px]">
    <span className="pr-2">RU</span>
    <svg viewBox="0 0 160 24" className="w-[160px] h-6" fill="none">
      <path d="M8 4h13v16H8Z" fill="#0c4a14" stroke="#ddd" />
      <path d="M9 8h11M9 12h11M9 16h11" stroke="#1e8a30" strokeWidth="1.500" />
      <circle cx="41" cy="12" r="9" fill="#ff7800" />
      <path d="m34 17 6-11 2 1 3 10-4-2-4 2Z" fill="#fff" />
      <path d="M60 4h16v16H60Z" fill="#333a38" stroke="#889" />
      <path d="M62 12c3-6 9-6 12 0-3 5-9 5-12 0Z" stroke="#76b900" strokeWidth="1.800" />
      <circle cx="68" cy="12" r="2" fill="#76b900" />
      <path d="M75 10v6M75 18v2" stroke="#ffe000" strokeWidth="2.500" />
      <path d="M87 9h3l5-5v16l-5-5h-3Z" fill="#fff" />
      <path d="M98 8c2 2 2 6 0 8M100 6c3 3 3 9 0 12" stroke="#ddd" strokeWidth="1.200" />
      <path d="M114 4v17" stroke="#fff" strokeWidth="2" />
      <path d="M115 4h5l3 2h5v9h-5l-3-2h-5Z" fill="#fff" />
      <circle cx="124" cy="17" r="5" fill="#d82020" />
      <path d="m122 15 4 4M126 15l-4 4" stroke="#fff" strokeWidth="1.500" />
      <path d="M143 7h14v9h-14ZM146 20h9M150 16v4M140 4v8h3" stroke="#fff" strokeWidth="1.800" />
    </svg>
    <div className="w-[92px] text-center leading-[19px]">
      <div>12:46</div>
      <div>19.06.2022</div>
    </div>
    <button aria-label="Свернуть все окна" className="w-[10px] h-10 border-l border-white/40 bg-white/15" />
  </div>
)

const Taskbar = () => (
  <footer className="flex items-center justify-between h-[41px] border-t border-[#5b7285] bg-[linear-gradient(90deg,#27313d_0%,#2b3a4e_12%,#2a3f5c_30%,#27436a_50%,#2f4a6c_60%,#34506f_72%,#1b2f55_78%,#1d3159_88%,#1f2f5c_95%,#6a4a80_97%,#8a6a98_100%)]">
    <div className="flex items-center">
      <button aria-label="Пуск" className="w-[60px] flex justify-center">
        <svg viewBox="0 0 36 36" className="w-[38px] h-[38px]">
          <defs>
            <radialGradient id="orb" cx=".5" cy=".9" r=".9"><stop offset="0" stopColor="#5fd8ff" /><stop offset=".5" stopColor="#2372b0" /><stop offset="1" stopColor="#a8c8dc" /></radialGradient>
          </defs>
          <circle cx="18" cy="18" r="17" fill="url(#orb)" stroke="#26455c" />
          <path d="M9 11c3-2 5-1 8 0l-1 7c-3-1-5-2-8 0Z" fill="#f0602c" />
          <path d="M18 11c3 1 6 2 9 0l-1 7c-3 2-6 1-9 0Z" fill="#8cc83c" />
          <path d="M8 20c3-2 5-1 8 0l-1 7c-3-1-5-2-8 0Z" fill="#3c9ce0" />
          <path d="M17 20c3 1 6 2 9 0l-1 7c-3 2-6 1-9 0Z" fill="#fcc82c" />
        </svg>
      </button>
      <button aria-label="Алиса" className="w-[68px] flex justify-center">
        <svg viewBox="0 0 36 36" className="w-9 h-9">
          <defs><linearGradient id="alice" x1="0" y1="0" x2="0" y2="1"><stop offset="0" stopColor="#b45cff" /><stop offset="1" stopColor="#6048f0" /></linearGradient></defs>
          <circle cx="18" cy="18" r="17.500" fill="url(#alice)" />
          <path d="M18 9c3 0 9 10 9 13 0 6-18 6-18 0 0-3 6-13 9-13Z" fill="#fff" />
        </svg>
      </button>
      <button aria-label="Проводник" className="w-16 flex justify-center">
        <svg viewBox="0 0 36 36" className="w-9 h-9">
          <path d="M3 5 15 1l17 5v6H3Z" fill="#d0a850" />
          <path d="M6 5h10v8H6Z" fill="#f4f4e8" />
          <path d="M16 6h12v8H16Z" fill="#78b850" />
          <path d="M1 9h14l2 2h18l-1 21H2Z" fill="#f4dc8c" />
          <path d="M6 34V24c0-2 3-2 4-2h16c1 0 4 0 4 2v10h-5v-7H11v7Z" fill="#88c8e8" stroke="#c8e8f8" />
        </svg>
      </button>
      <div className="grid grid-cols-[repeat(17,minmax(0,1fr))] gap-[2px] w-[973px]">
        {tasks.map((t) => (
          <button
            key={t.label}
            aria-label={t.label}
            className={`h-10 flex items-center justify-center rounded-sm ${t.active ? 'border border-white/60 bg-gradient-to-b from-white/60 to-white/40' : t.open ? 'border border-white/40 bg-gradient-to-br from-white/40 to-white/10' : ''}`}
          >
            <svg viewBox="0 0 32 32" className="w-[34px] h-[34px] overflow-visible">{t.icon}</svg>
          </button>
        ))}
      </div>
    </div>
    <Tray />
  </footer>
)

const App = () => {
  return (
    <div className="min-h-screen overflow-hidden bg-white font-['Open_Sans',sans-serif]">
      <TitleBar />
      <Ribbon />
      <FormulaBar />
      <div className="flex">
        <main className="flex-1 min-w-0 overflow-hidden">
          <Sheet />
        </main>
        <VScroll />
      </div>
      <SheetTabs />
      <StatusBar />
      <Taskbar />
    </div>
  )
}

export default App
